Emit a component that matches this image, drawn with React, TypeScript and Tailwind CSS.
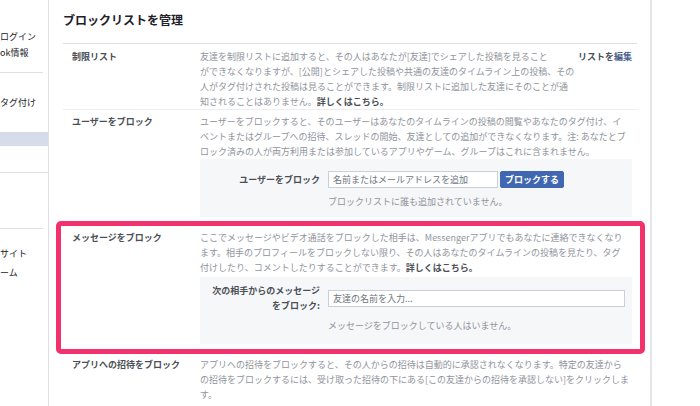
const font = "font-['Noto_Sans_CJK_JP','Liberation_Sans',sans-serif]";

const Line = ({ children }: { children: React.ReactNode }) => (
  <span className="block whitespace-nowrap">{children}</span>
);

const More = () => <span className="font-bold text-[#4b4f56]">詳しくはこちら。</span>;

const Sidebar = () => (
  <aside className="w-[49px] shrink-0 overflow-hidden border-r border-[#dddfe2] text-[9px] text-[#1d2129]">
    <div className="mr-[5px] border-b border-[#dddfe2] pt-[29px] pb-[11px] leading-[16px]">
      <div className="whitespace-nowrap">ログイン</div>
      <div className="whitespace-nowrap">ok情報</div>
    </div>
    <div className="h-[100px] border-b border-[#dddfe2] pt-[22px] leading-[16px]">
      <div className="whitespace-nowrap">タグ付け</div>
      <div className="mt-[21px] h-[14px] bg-[#d6dce9]" />
    </div>
    <div className="mr-[5px] h-[56px] border-b border-[#dddfe2]" />
    <div className="pt-[15px] leading-[19px]">
      <div className="whitespace-nowrap">サイト</div>
      <div className="whitespace-nowrap">ーム</div>
    </div>
  </aside>
);

export default function App() {
  return (
    <div className={`flex h-[406px] w-[700px] overflow-hidden bg-white ${font}`}>
      <Sidebar />

      <main className="w-[603px] shrink-0 border-r-2 border-[#e5e6e9] pl-[14px] pr-[13px]">
        <header className="h-[44px] border-b border-[#dddfe2] pt-[13px]">
          <h1 className="text-[12px] font-bold leading-[14px] text-[#1d2129]">ブロックリストを管理</h1>
        </header>

        {/* 制限リスト */}
        <section className="flex border-b border-[#eceef1] pt-[5px] text-[9px] leading-[15px]">
          <div className="w-[137px] shrink-0 pl-[9px] font-bold text-[#4b4f56]">制限リスト</div>
          <div className="flex flex-1 justify-between pr-[5px]">
            <div className="text-[#90949c]">
              <Line>友達を制限リストに追加すると、その人はあなたが[友達]でシェアした投稿を見ること</Line>
              <Line>ができなくなりますが、[公開]とシェアした投稿や共通の友達のタイムライン上の投稿、その</Line>
              <Line>人がタグ付けされた投稿は見ることができます。制限リストに追加した友達にそのことが通</Line>
              <Line>
                知されることはありません。<More />
              </Line>
            </div>
            <a className="shrink-0 font-bold text-[#4b4f56]">
              リストを<span className="text-[#4a5f8c]">編集</span>
            </a>
          </div>
        </section>

        {/* ユーザーをブロック */}
        <section className="flex pt-[4px] pb-[4px] text-[9px] leading-[15px]">
          <div className="w-[137px] shrink-0 pl-[9px] font-bold text-[#4b4f56]">ユーザーをブロック</div>
          <div className="flex-1 pr-[5px]">
            <div className="text-[#90949c]">
              <Line>ユーザーをブロックすると、そのユーザーはあなたのタイムラインの投稿の閲覧やあなたのタグ付け、イ</Line>
              <Line>ベントまたはグループへの招待、スレッドの開始、友達としての追加ができなくなります。注: あなたとブ</Line>
              <Line>ロック済みの人が両方利用または参加しているアプリやゲーム、グループはこれに含まれません。</Line>
            </div>
            <div className="bg-[#f6f7f9] pt-[12px] pb-[8px]">
              <div className="flex h-[17px] items-center">
                <label className="w-[120px] shrink-0 text-right font-bold text-[#4b4f56]">ユーザーをブロック</label>
                <input
                  className="ml-[8px] h-[17px] w-[170px] border border-[#ccd0d5] bg-white px-[4px] text-[9px] text-[#1d2129] outline-none placeholder:text-[#6f7680]"
                  placeholder="名前またはメールアドレスを追加"
                />
                <button className="ml-[2px] h-[17px] w-[64px] rounded-[2px] border border-[#4267b2] bg-[#4267b2] text-[9px] font-bold leading-none text-white">
                  ブロックする
                </button>
              </div>
              <p className="mt-[6px] pl-[128px] text-[#90949c]">ブロックリストに誰も追加されていません。</p>
            </div>
          </div>
        </section>

        {/* メッセージをブロック (highlighted) */}
        <section className="-ml-[7px] -mr-[8px] flex rounded-[5px] border-[5px] border-[#f2316d] pt-[4px] pb-[5px] text-[9px] leading-[15px]">
          <div className="w-[139px] shrink-0 pl-[11px] font-bold text-[#4b4f56]">メッセージをブロック</div>
          <div className="flex-1 pr-[8px]">
            <div className="text-[#90949c]">
              <Line>ここでメッセージやビデオ通話をブロックした相手は、Messengerアプリでもあなたに連絡できなくなり</Line>
              <Line>ます。相手のプロフィールをブロックしない限り、その人はあなたのタイムラインの投稿を見たり、タグ</Line>
              <Line>
                付けしたり、コメントしたりすることができます。<More />
              </Line>
            </div>
            <div className="mt-[2px] bg-[#f6f7f9] pt-[6px] pr-[7px] pb-[11px]">
              <div className="flex items-center">
                <label className="w-[120px] shrink-0 text-right font-bold text-[#4b4f56]">
                  次の相手からのメッセージ
                  <br />
                  をブロック:
                </label>
                <input
                  className="ml-[8px] h-[17px] flex-1 border border-[#ccd0d5] bg-white px-[4px] text-[9px] text-[#1d2129] outline-none placeholder:text-[#6f7680]"
                  placeholder="友達の名前を入力..."
                />
              </div>
              <p className="mt-[5px] pl-[128px] text-[#90949c]">メッセージをブロックしている人はいません。</p>
            </div>
          </div>
        </section>

        {/* アプリへの招待をブロック */}
        <section className="flex pt-[3px] text-[9px] leading-[15px]">
          <div className="w-[137px] shrink-0 pl-[9px] font-bold text-[#4b4f56]">アプリへの招待をブロック</div>
          <div className="flex-1 pr-[5px] text-[#90949c]">
            <Line>アプリへの招待をブロックすると、その人からの招待は自動的に承認されなくなります。特定の友達から</Line>
            <Line>の招待をブロックするには、受け取った招待の下にある[この友達からの招待を承認しない]をクリックしま</Line>
            <Line>す。</Line>
          </div>
        </section>
      </main>

      <div className="flex-1 bg-white" />
    </div>
  );
}
